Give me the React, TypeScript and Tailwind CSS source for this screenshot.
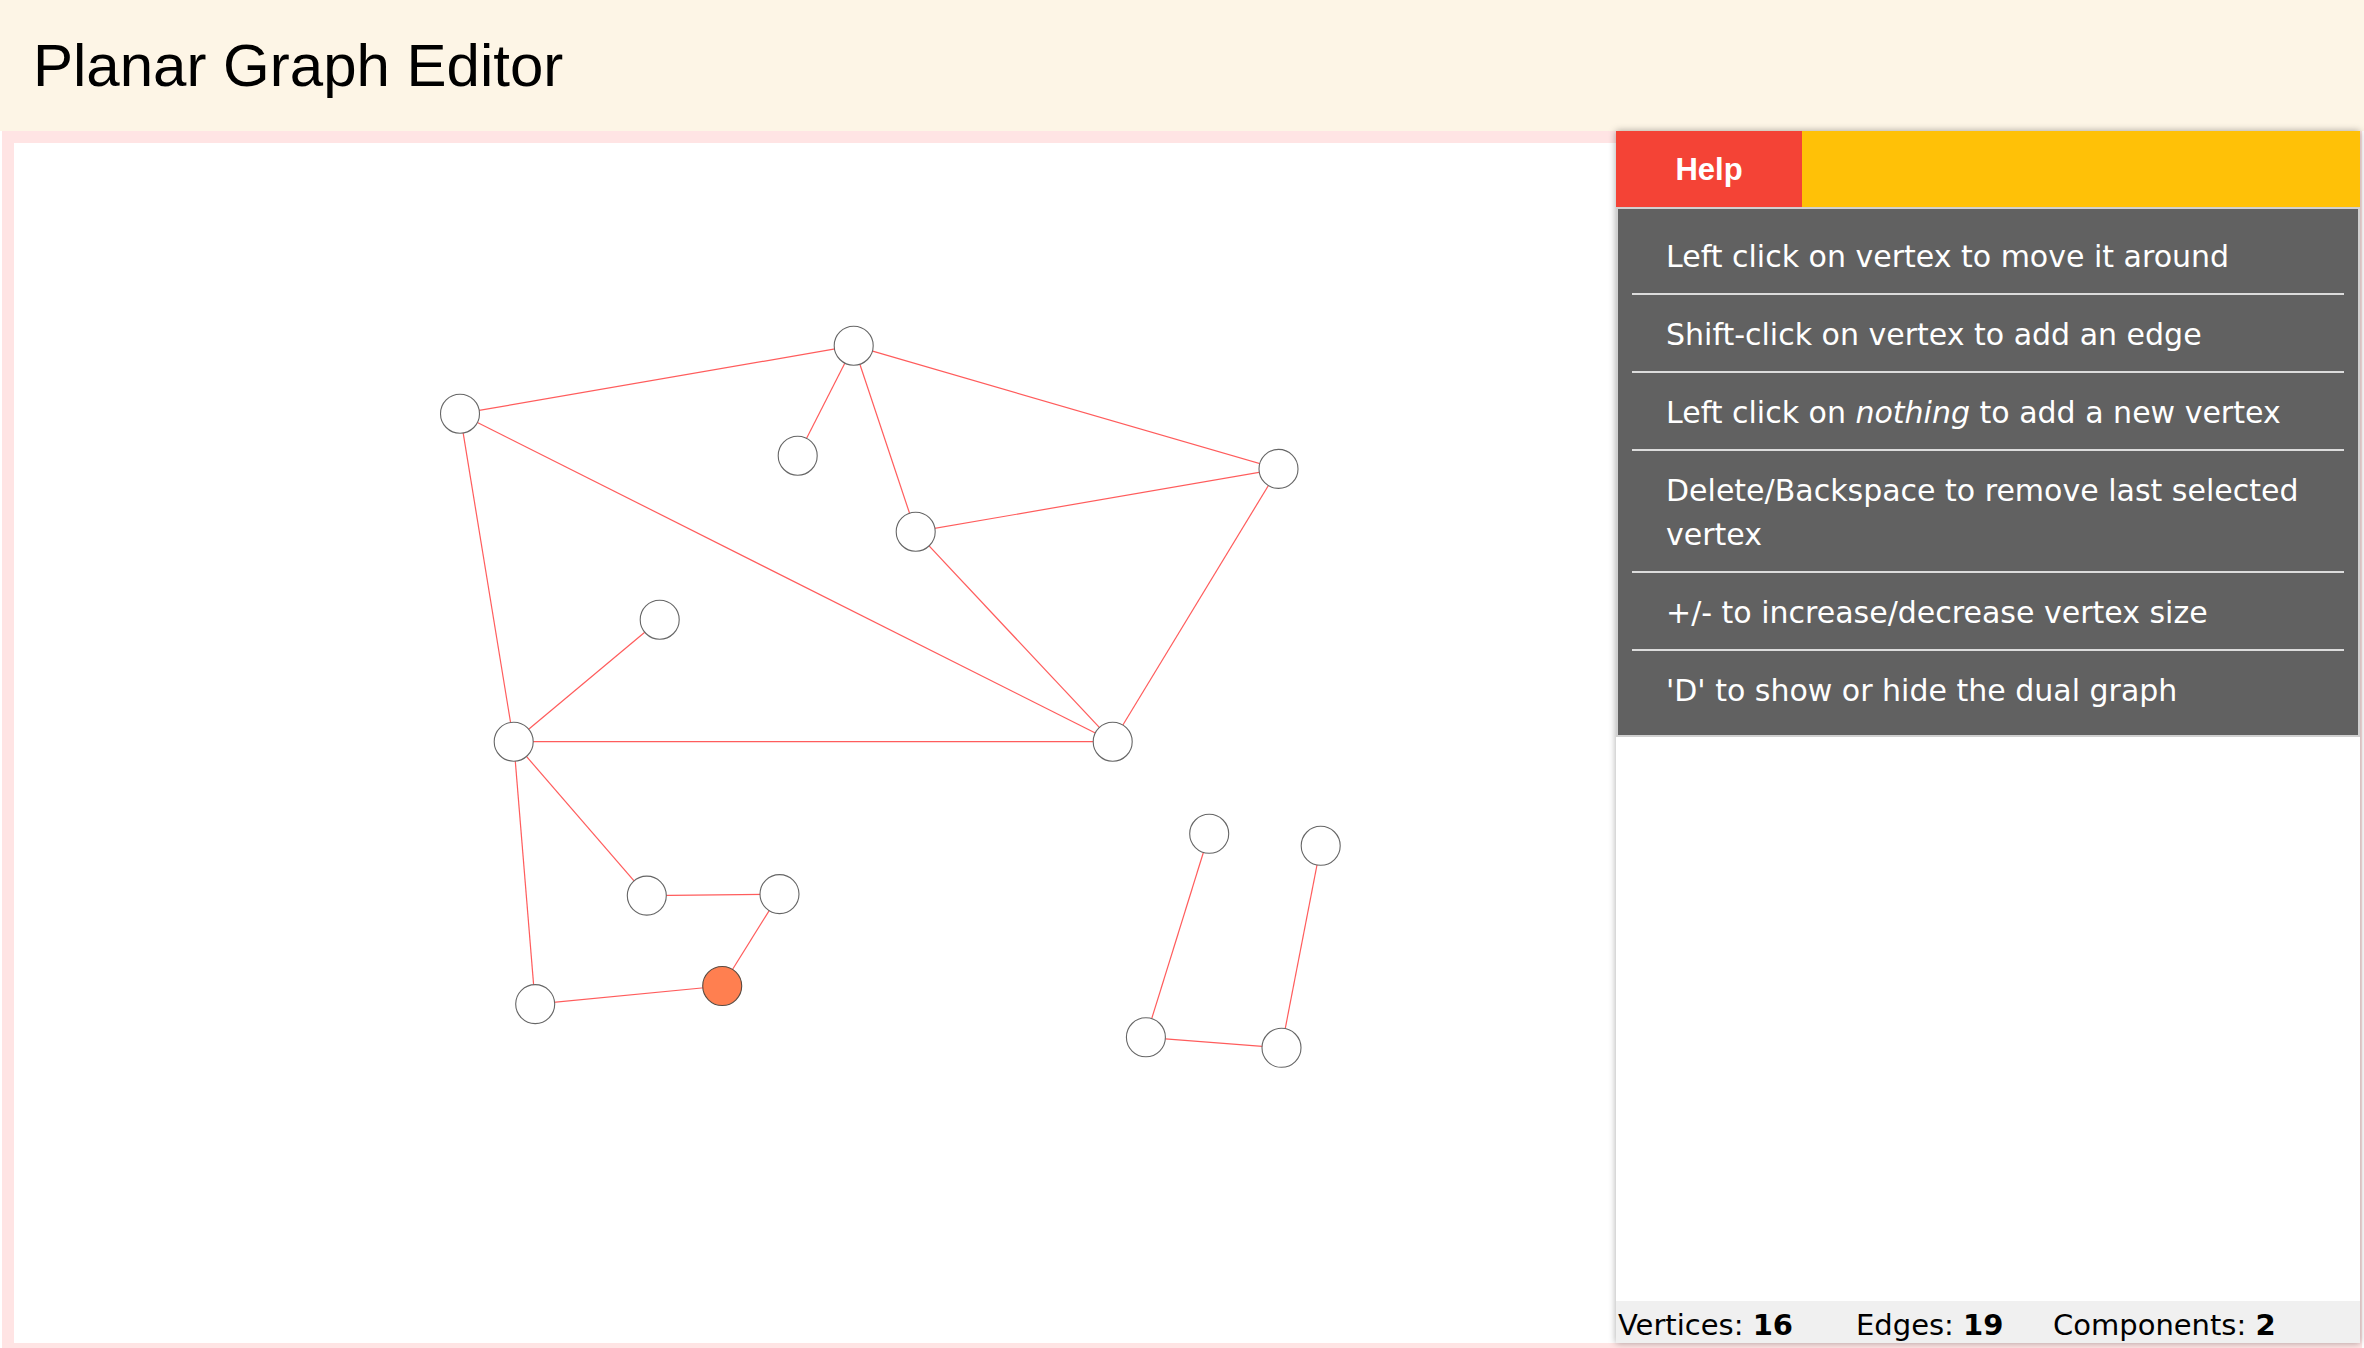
import React from "react";

type V = { x: number; y: number; selected?: boolean };

const vertices: V[] = [
  { x: 446, y: 270.7 },
  { x: 839.7, y: 202.7 },
  { x: 783.7, y: 312.7 },
  { x: 1264.5, y: 325.9 },
  { x: 901.7, y: 388.7 },
  { x: 645.7, y: 476.7 },
  { x: 499.7, y: 598.7 },
  { x: 1098.7, y: 598.7 },
  { x: 632.8, y: 752.6 },
  { x: 765.5, y: 751.1 },
  { x: 521.2, y: 861.1 },
  { x: 708.2, y: 843, selected: true },
  { x: 1195.2, y: 690.8 },
  { x: 1306.7, y: 702.8 },
  { x: 1131.9, y: 894.3 },
  { x: 1267.5, y: 904.8 },
];

const edges: [number, number][] = [
  [1, 2],
  [1, 8],
  [1, 7],
  [2, 3],
  [2, 5],
  [2, 4],
  [4, 5],
  [4, 8],
  [5, 8],
  [6, 7],
  [7, 8],
  [7, 9],
  [7, 11],
  [9, 10],
  [10, 12],
  [11, 12],
  [13, 15],
  [14, 16],
  [15, 16],
];

const helpFont = { fontFamily: '"DejaVu Sans", Verdana, sans-serif' };

function HelpRow({ children, last }: { children: React.ReactNode; last?: boolean }) {
  return (
    <div
      className={
        last
          ? "pl-[34px] pr-[24px] pt-[18px] pb-[14px] text-[30px] leading-[44px] text-white"
          : "pl-[34px] pr-[24px] pt-[18px] pb-[14px] text-[30px] leading-[44px] text-white border-b-2 border-[#dcdcdc]"
      }
    >
      {children}
    </div>
  );
}

export default function App() {
  return (
    <div className="relative h-screen w-full overflow-hidden bg-white">
      <header className="flex h-[131px] items-center bg-[#fdf5e6] pl-[33px]">
        <h1
          className="text-[60px] leading-[60px] font-normal text-black"
          style={{ fontFamily: '"Liberation Sans", Arial, sans-serif' }}
        >
          Planar Graph Editor
        </h1>
      </header>

      <main className="mx-[2px] h-[1224px] border-[12px] border-[#ffe4e4] bg-white">
        <svg className="block h-full w-full">
          {edges.map(([a, b], i) => {
            const p = vertices[a - 1];
            const q = vertices[b - 1];
            return (
              <line
                key={i}
                x1={p.x}
                y1={p.y}
                x2={q.x}
                y2={q.y}
                stroke="#ff5c5c"
                strokeWidth={1.2}
              />
            );
          })}
          {vertices.map((v, i) => (
            <circle
              key={i}
              cx={v.x}
              cy={v.y}
              r={19.5}
              fill={v.selected ? "#ff7f50" : "#ffffff"}
              stroke={v.selected ? "#5a4a40" : "#666666"}
              strokeWidth={1.1}
            />
          ))}
        </svg>
      </main>

      <aside className="absolute right-[4px] top-[131px] flex h-[1212px] w-[744px] flex-col bg-white shadow-[0_0_7px_rgba(0,0,0,0.35)]">
        <div className="flex h-[76px] shrink-0 bg-[#ffc107]">
          <div
            className="flex w-[186px] items-center justify-center bg-[#f44336] pt-[3px] text-[31px] font-bold text-white"
            style={{ fontFamily: '"Liberation Sans", Arial, sans-serif' }}
          >
            Help
          </div>
        </div>
        <div
          className="shrink-0 border-2 border-[#d0d0d0] bg-[#616161] px-[14px] py-[8px]"
          style={helpFont}
        >
          <HelpRow>Left click on vertex to move it around</HelpRow>
          <HelpRow>Shift-click on vertex to add an edge</HelpRow>
          <HelpRow>
            Left click on <em className="italic">nothing</em> to add a new vertex
          </HelpRow>
          <HelpRow>Delete/Backspace to remove last selected vertex</HelpRow>
          <HelpRow>+/- to increase/decrease vertex size</HelpRow>
          <HelpRow last>'D' to show or hide the dual graph</HelpRow>
        </div>
        <div className="flex-1" />
        <div
          className="flex h-[42px] shrink-0 bg-[#f0f0f0] pl-[2px] pt-[7px] text-[29px] leading-[34px] text-black"
          style={helpFont}
        >
          <span className="w-[238px] shrink-0 whitespace-nowrap">
            Vertices: <b className="font-bold">16</b>
          </span>
          <span className="w-[197px] shrink-0 whitespace-nowrap">
            Edges: <b className="font-bold">19</b>
          </span>
          <span className="whitespace-nowrap">
            Components: <b className="font-bold">2</b>
          </span>
        </div>
      </aside>
    </div>
  );
}
